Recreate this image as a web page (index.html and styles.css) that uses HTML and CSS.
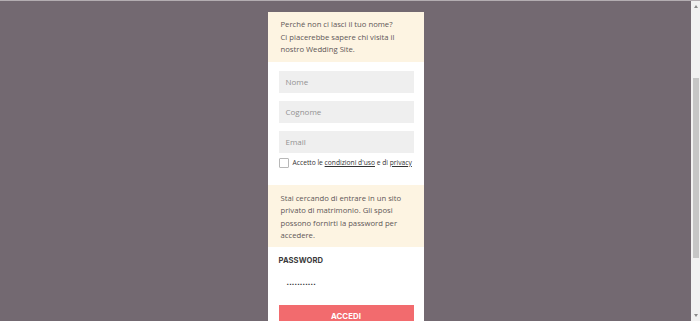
FILE: index.html
```html
<!DOCTYPE html>
<html lang="it">
<head>
<meta charset="utf-8">
<title>Wedding Site</title>
<link rel="stylesheet" href="styles.css">
</head>
<body>
<div class="page">
  <div class="viewport">
    <div class="card">
      <div class="note">Perché non ci lasci il tuo nome?<br>Ci piacerebbe sapere chi visita il<br>nostro Wedding Site.</div>
      <div class="fields">
        <div class="field">Nome</div>
        <div class="field">Cognome</div>
        <div class="field">Email</div>
        <div class="check-row">
          <span class="checkbox"></span>
          <span class="check-text">Accetto le <a class="link">condizioni d'uso</a> e di <a class="link">privacy</a></span>
        </div>
      </div>
      <div class="note note-access">Stai cercando di entrare in un sito<br>privato di matrimonio. Gli sposi<br>possono fornirti la password per<br>accedere.</div>
      <div class="login">
        <div class="label">PASSWORD</div>
        <div class="password"><span class="dots">...........</span></div>
        <div class="button">ACCEDI</div>
      </div>
    </div>
  </div>
  <div class="scrollbar">
    <div class="arrow-box"><span class="arrow-up"></span></div>
    <div class="track-top"></div>
    <div class="thumb"></div>
    <div class="track-bottom"></div>
    <div class="arrow-box"><span class="arrow-down"></span></div>
  </div>
</div>
</body>
</html>
```
FILE: styles.css
```css
html, body {
  margin: 0;
  padding: 0;
  height: 321px;
  overflow: hidden;
}
body {
  font-family: "Open Sans", "DejaVu Sans", sans-serif;
}
.page {
  display: flex;
  height: 321px;
  border-top: 1px solid #b3adb1;
  box-sizing: border-box;
}
.viewport {
  flex: 1;
  background: #736971;
  padding-top: 11px;
  overflow: hidden;
}
.card {
  width: 156px;
  margin: 0 auto;
  background: #ffffff;
  padding-bottom: 40px;
}
.note {
  background: #fdf4e2;
  color: #5e5757;
  font-size: 7.7px;
  line-height: 12.5px;
  padding: 6px 8px 6px 13px;
  white-space: nowrap;
}
.note-access {
  margin-top: 17px;
  padding-top: 7px;
  padding-bottom: 5px;
}
.fields {
  padding: 9px 10px 0 11px;
}
.field {
  height: 22px;
  background: #efefef;
  color: #929292;
  font-size: 8px;
  line-height: 22px;
  padding-left: 7px;
  margin-bottom: 8px;
}
.fields .field:nth-child(3) {
  margin-bottom: 5px;
}
.check-row {
  display: flex;
  align-items: center;
  gap: 4px;
  height: 10px;
}
.checkbox {
  width: 8px;
  height: 8px;
  border: 1px solid #b8b8b8;
  border-radius: 1px;
  background: #fff;
}
.check-text {
  font-size: 6.7px;
  color: #333;
  white-space: nowrap;
}
.link {
  color: #333;
  text-decoration: underline;
}
.login {
  padding: 9px 10px 0 11px;
}
.label {
  font-family: Inter, "DejaVu Sans", sans-serif;
  font-weight: 700;
  font-size: 7.6px;
  line-height: 10px;
  letter-spacing: 0.1px;
  color: #3a3a3a;
}
.password {
  height: 22px;
  margin-top: 8px;
  display: flex;
  align-items: center;
  padding-left: 8px;
}
.dots {
  font-family: "DejaVu Sans", sans-serif;
  font-size: 6.5px;
  font-weight: 700;
  letter-spacing: 0.2px;
  color: #333;
  line-height: 10px;
  position: relative;
  top: -2px;
}
.button {
  margin-top: 9px;
  height: 22px;
  background: #f26b6e;
  color: #fff;
  font-family: Inter, "DejaVu Sans", sans-serif;
  font-weight: 700;
  font-size: 7.8px;
  letter-spacing: 0.1px;
  line-height: 22px;
  text-align: center;
}
.scrollbar {
  width: 9px;
  background: #f1f1f1;
  display: flex;
  flex-direction: column;
}
.arrow-box {
  height: 11px;
  display: flex;
  align-items: center;
  justify-content: center;
}
.arrow-up {
  width: 0;
  height: 0;
  border-left: 2.5px solid transparent;
  border-right: 2.5px solid transparent;
  border-bottom: 3px solid #8a8a8a;
}
.arrow-down {
  width: 0;
  height: 0;
  border-left: 2.5px solid transparent;
  border-right: 2.5px solid transparent;
  border-top: 3px solid #8a8a8a;
}
.track-top {
  height: 66px;
}
.thumb {
  height: 180px;
  margin: 0 1px 0 2px;
  background: #c6c6c6;
}
.track-bottom {
  flex: 1;
}
```
